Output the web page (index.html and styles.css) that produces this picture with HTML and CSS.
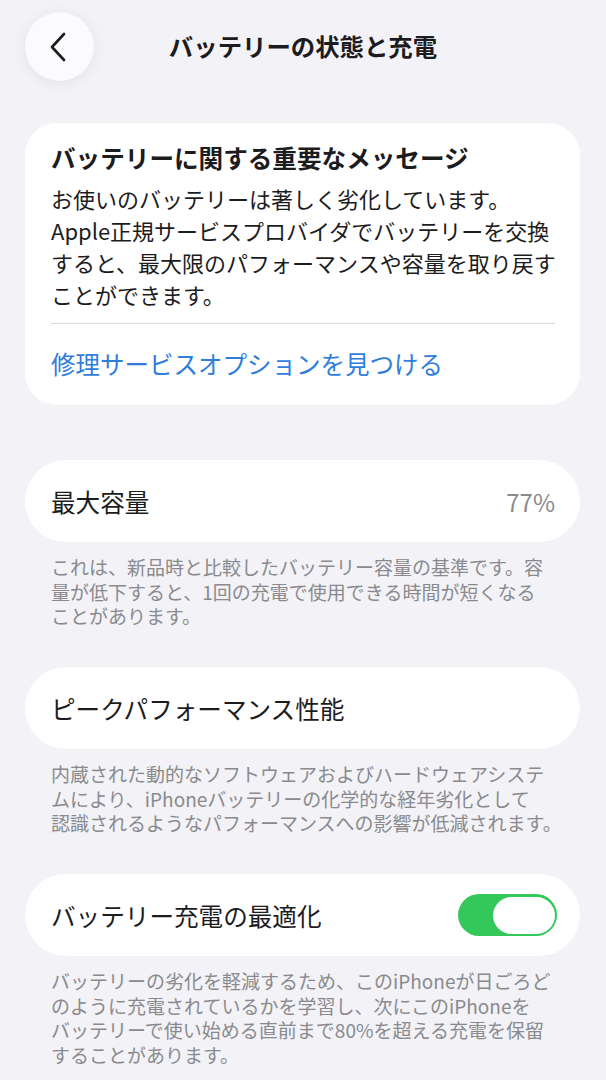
FILE: index.html
```html
<!DOCTYPE html>
<html lang="ja">
<head>
<meta charset="utf-8">
<link rel="stylesheet" href="styles.css">
</head>
<body>
<div class="page">
  <header class="nav">
    <div class="back">
      <svg width="20" height="30" viewBox="0 0 20 30"><path d="M16 2 L4 15 L16 28" fill="none" stroke="#1c1c1e" stroke-width="2.6" stroke-linecap="round" stroke-linejoin="round"/></svg>
    </div>
    <h1 class="nav-title">バッテリーの状態と充電</h1>
  </header>

  <section class="card msg">
    <h2 class="msg-title">バッテリーに関する重要なメッセージ</h2>
    <p class="msg-body">お使いのバッテリーは著しく劣化しています。<br>Apple正規サービスプロバイダでバッテリーを交換<br>すると、最大限のパフォーマンスや容量を取り戻す<br>ことができます。</p>
    <div class="divider"></div>
    <div class="link-row"><span class="link">修理サービスオプションを見つける</span></div>
  </section>

  <section class="group">
    <div class="card row">
      <span class="row-label">最大容量</span>
      <span class="row-value">77%</span>
    </div>
    <p class="footer">これは、新品時と比較したバッテリー容量の基準です。容<br>量が低下すると、1回の充電で使用できる時間が短くなる<br>ことがあります。</p>
  </section>

  <section class="group">
    <div class="card row">
      <span class="row-label">ピークパフォーマンス性能</span>
    </div>
    <p class="footer">内蔵された動的なソフトウェアおよびハードウェアシステ<br>ムにより、iPhoneバッテリーの化学的な経年劣化として<br>認識されるようなパフォーマンスへの影響が低減されます。</p>
  </section>

  <section class="group">
    <div class="card row">
      <span class="row-label">バッテリー充電の最適化</span>
      <span class="toggle"><span class="knob"></span></span>
    </div>
    <p class="footer">バッテリーの劣化を軽減するため、このiPhoneが日ごろど<br>のように充電されているかを学習し、次にこのiPhoneを<br>バッテリーで使い始める直前まで80%を超える充電を保留<br>することがあります。</p>
  </section>
</div>
</body>
</html>
```

FILE: styles.css
```css
* { box-sizing: border-box; }
html, body {
  margin: 0;
  padding: 0;
  background: #f2f2f7;
}
body {
  font-family: "Noto Sans CJK JP", "Noto Sans", sans-serif;
  color: #1c1c1e;
  width: 606px;
  height: 1080px;
  overflow: hidden;
}
.page {
  padding: 0 26px 0 25px;
}
.nav {
  position: relative;
  height: 123px;
  padding-top: 12px;
}
.back {
  width: 69px;
  height: 69px;
  border-radius: 50%;
  background: #fbfbfd;
  box-shadow: 0 2px 14px rgba(0, 0, 0, 0.07);
  display: flex;
  align-items: center;
  justify-content: center;
  padding-right: 3px;
}
.nav-title {
  position: absolute;
  left: -25px;
  right: -26px;
  top: 28px;
  margin: 0;
  text-align: center;
  font-size: 24.4px;
  line-height: 36px;
  font-weight: 700;
  color: #1c1c1e;
}
.card {
  background: #ffffff;
  border-radius: 32px;
}
.msg {
  padding: 18px 25px 0 26px;
  height: 282px;
}
.msg-title {
  margin: 0;
  font-size: 24.6px;
  line-height: 32px;
  font-weight: 700;
}
.msg-body {
  margin: 9px 0 0;
  font-size: 22px;
  line-height: 32px;
  white-space: nowrap;
}
.divider {
  margin-top: 13px;
  height: 1px;
  background: #dcdce0;
}
.link-row {
  height: 79px;
  display: flex;
  align-items: center;
}
.link {
  font-size: 24.5px;
  color: #2f7ddc;
}
.group {
  margin-top: 55px;
}
.group + .group {
  margin-top: 38.5px;
}
.row {
  height: 82px;
  border-radius: 41px;
  padding: 0 25px 0 26px;
  display: flex;
  align-items: center;
  justify-content: space-between;
}
.row-label {
  font-size: 24.6px;
}
.row-value {
  font-size: 24px;
  color: #8a8a8e;
}
.toggle {
  width: 99px;
  height: 42px;
  border-radius: 21px;
  background: #34c759;
  margin-right: -2px;
  display: flex;
  align-items: center;
  justify-content: flex-end;
  padding-right: 2px;
}
.knob {
  width: 62px;
  height: 37px;
  border-radius: 19px;
  background: #ffffff;
}
.footer {
  margin: 13px 0 0 26px;
  font-size: 19px;
  line-height: 24.5px;
  color: #8a8a8e;
  white-space: nowrap;
}
```
